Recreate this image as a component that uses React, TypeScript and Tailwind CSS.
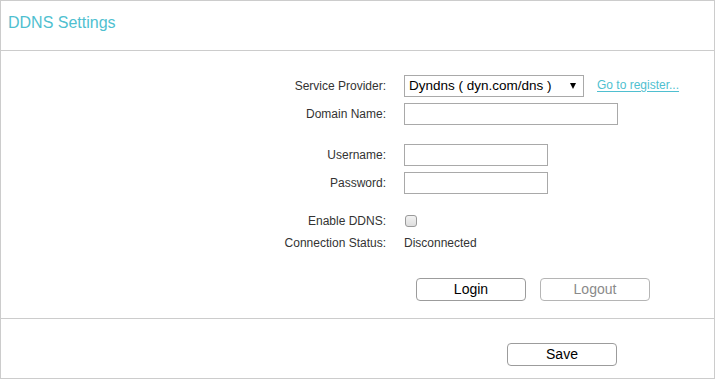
const Row = ({ label, className, children }: { label: string; className?: string; children?: React.ReactNode }) => {
  return (
    <div className={`flex items-center h-[22px] ${className ?? ""}`}>
      <div className="w-[385px] text-right text-[12px] text-[#333]">{label}</div>
      <div className="ml-[18px] flex items-center">{children}</div>
    </div>
  );
};

const TextBox = ({ width }: { width: string }) => (
  <input type="text" className={`${width} h-[22px] border border-[#a9a9a9] bg-white outline-none`} />
);

export default function App() {
  return (
    <div className="w-[715px] h-[379px] bg-white border border-[#cccccc] font-['Liberation_Sans',Arial,sans-serif] flex flex-col">
      <div className="h-[50px] border-b border-[#cccccc] flex items-start px-[7px] pt-[10px]">
        <h2 className="text-[16px] text-[#4fbfd0]">DDNS Settings</h2>
      </div>

      <div className="flex flex-col pt-[24px] h-[267px]">
        <Row label="Service Provider:">
          <div className="w-[180px] h-[22px] border border-[#a9a9a9] flex items-center justify-between pl-[4px] pr-[7px] text-[13.5px] text-black">
            <span>Dyndns ( dyn.com/dns )</span>
            <span className="w-0 h-0 border-l-[3.5px] border-r-[3.5px] border-t-[6px] border-l-transparent border-r-transparent border-t-black" />
          </div>
          <a className="ml-[13px] text-[12px] text-[#4fbfd0] underline underline-offset-2 -mt-[3px]">Go to register...</a>
        </Row>
        <Row label="Domain Name:" className="mt-[6px]">
          <TextBox width="w-[214px]" />
        </Row>
        <Row label="Username:" className="mt-[19px]">
          <TextBox width="w-[144px]" />
        </Row>
        <Row label="Password:" className="mt-[6px]">
          <TextBox width="w-[144px]" />
        </Row>
        <Row label="Enable DDNS:" className="mt-[16px]">
          <span className="ml-[1px] w-[12px] h-[12px] rounded-[3px] border border-[#9a9a9a] bg-gradient-to-b from-[#f2f2f2] to-[#dedede]" />
        </Row>
        <Row label="Connection Status:">
          <span className="text-[12px] text-[#333]">Disconnected</span>
        </Row>
        <div className="flex mt-[24px] pl-[415px] gap-[14px]">
          <button className="w-[110px] h-[23px] rounded-[4px] border border-[#9c9c9c] bg-white text-[14px] text-black">Login</button>
          <button className="w-[110px] h-[23px] rounded-[4px] border border-[#b5b5b5] bg-white text-[14px] text-[#8a8a8a]">Logout</button>
        </div>
      </div>

      <div className="border-t border-[#cccccc] flex-1 pt-[23px] pl-[506px]">
        <button className="w-[110px] h-[23px] rounded-[4px] border border-[#9c9c9c] bg-white text-[14px] text-black">Save</button>
      </div>
    </div>
  );
}
